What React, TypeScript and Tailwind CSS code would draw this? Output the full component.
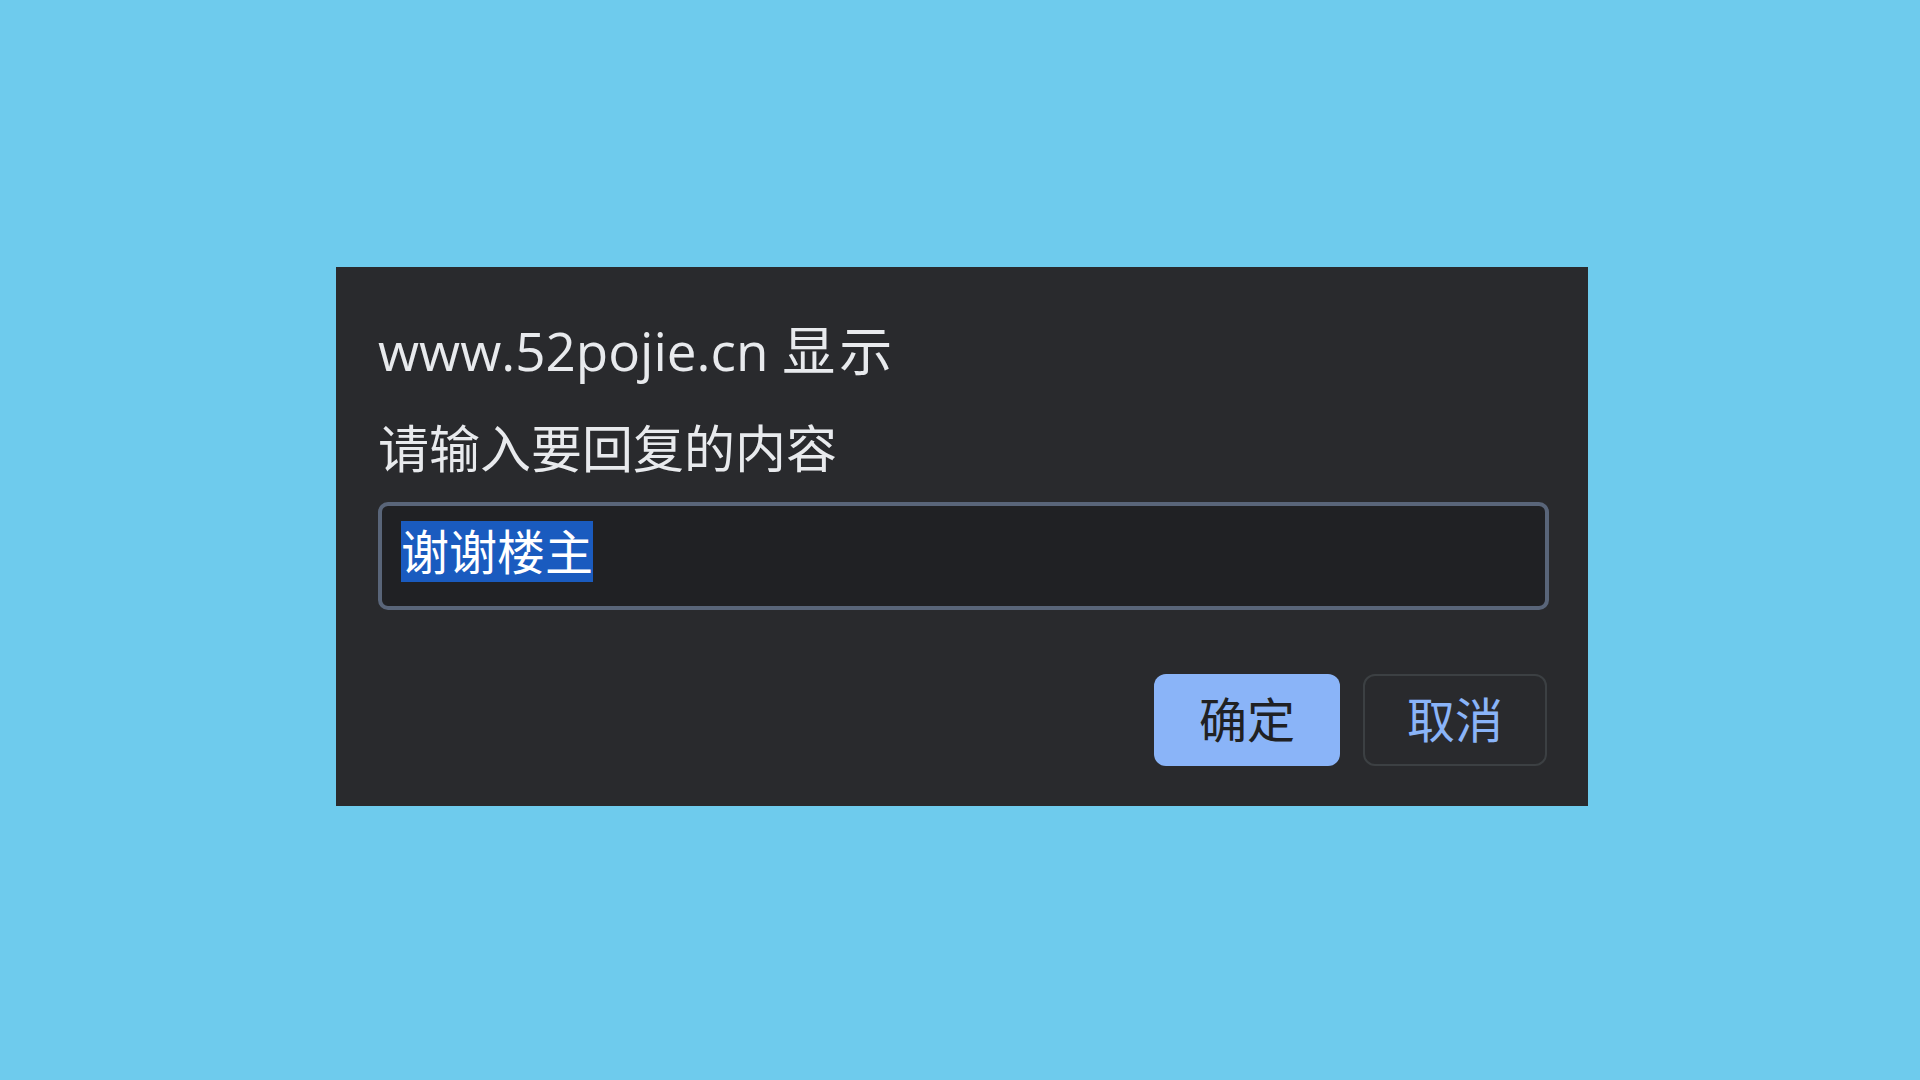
import React from "react";

const font = {
  fontFamily: '"Open Sans", "Noto Sans CJK SC", sans-serif',
};

export default function App() {
  return (
    <div className="flex h-screen w-full bg-[#6ecbed] pl-[336px] pt-[267px]" style={font}>
      <div className="flex h-[539px] w-[1252px] flex-col bg-[#292a2d] pl-[42px] pr-[39px] pt-[54px] pb-[40px]">
        <h1 className="text-[53px] leading-[60px] font-normal text-[#e8eaed]">
          www.52pojie.cn <span className="tracking-[4px]">显示</span>
        </h1>
        <p className="mt-[37px] text-[51px] leading-[60px] text-[#e8eaed]">
          请输入要回复的内容
        </p>

        <div className="mt-[24px] flex rounded-[10px] border-[4px] border-[#596579] bg-[#202124] pl-[19px] pt-[15px] pb-[24px]">
          <span className="inline-block h-[61px] bg-[#1a5bbf] text-[48px] leading-[61px] text-white">
            谢谢楼主
          </span>
        </div>

        <div className="mt-auto flex justify-end gap-[23px] pr-[2px]">
          <button className="flex h-[92px] w-[186px] items-center justify-center rounded-[12px] bg-[#8ab4f8] text-[48px] text-[#202124]">
            确定
          </button>
          <button className="flex h-[92px] w-[184px] items-center justify-center rounded-[12px] border-2 border-[#3c4043] text-[48px] text-[#8ab4f8]">
            取消
          </button>
        </div>
      </div>
    </div>
  );
}
